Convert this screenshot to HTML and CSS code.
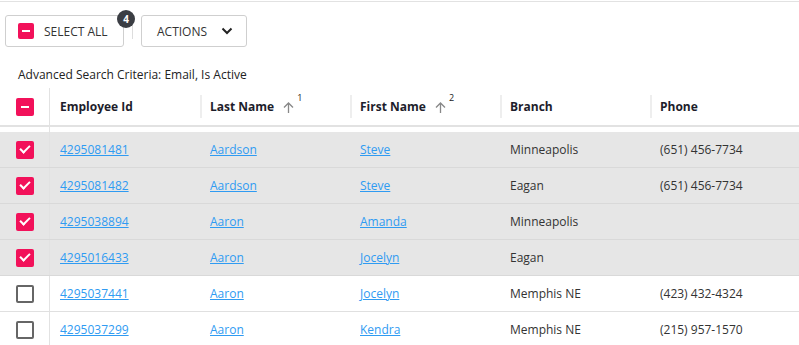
FILE: index.html
```html
<!DOCTYPE html>
<html lang="en">
  <head>
    <meta charset="UTF-8" />
    <meta name="viewport" content="width=device-width, initial-scale=1.0" />
    <title>Employees</title>
    <link rel="stylesheet" href="styles.css">
  </head>
  <body>
    <main class="panel">
      <div class="toolbar">
        <button class="btn selectAll">
          <span class="box partial"></span>
          SELECT ALL
          <span class="badge">4</span>
        </button>
        <span class="divider"></span>
        <button class="btn actions">
          ACTIONS
          <svg width="12" height="8" viewBox="0 0 12 8"><path d="M1.5 1.5 L6 6 L10.5 1.5" fill="none" stroke="#222" stroke-width="2"/></svg>
        </button>
      </div>
      <div class="criteria">Advanced Search Criteria: Email, Is Active</div>
      <div class="grid">
        <div class="head">
          <div class="cell chk"><span class="box partial"></span></div>
          <div class="cell"><span class="hd">Employee Id</span></div>
          <div class="cell">
            <span class="hd">Last Name</span>
            <svg class="arrow" width="11" height="11" viewBox="0 0 11 11"><path d="M5.5 11 V1.2 M1 5.5 L5.5 1 L10 5.5" fill="none" stroke="#888" stroke-width="1.3"/></svg>
            <sup class="order">1</sup>
          </div>
          <div class="cell">
            <span class="hd">First Name</span>
            <svg class="arrow" width="11" height="11" viewBox="0 0 11 11"><path d="M5.5 11 V1.2 M1 5.5 L5.5 1 L10 5.5" fill="none" stroke="#888" stroke-width="1.3"/></svg>
            <sup class="order">2</sup>
          </div>
          <div class="cell"><span class="hd">Branch</span></div>
          <div class="cell"><span class="hd">Phone</span></div>
        </div>
        <div class="body">
          <div class="row sel">
            <div class="cell chk"><span class="box checked"></span></div>
            <div class="cell"><a href="#">4295081481</a></div>
            <div class="cell"><a href="#">Aardson</a></div>
            <div class="cell"><a href="#">Steve</a></div>
            <div class="cell">Minneapolis</div>
            <div class="cell">(651) 456-7734</div>
          </div>
          <div class="row sel">
            <div class="cell chk"><span class="box checked"></span></div>
            <div class="cell"><a href="#">4295081482</a></div>
            <div class="cell"><a href="#">Aardson</a></div>
            <div class="cell"><a href="#">Steve</a></div>
            <div class="cell">Eagan</div>
            <div class="cell">(651) 456-7734</div>
          </div>
          <div class="row sel">
            <div class="cell chk"><span class="box checked"></span></div>
            <div class="cell"><a href="#">4295038894</a></div>
            <div class="cell"><a href="#">Aaron</a></div>
            <div class="cell"><a href="#">Amanda</a></div>
            <div class="cell">Minneapolis</div>
            <div class="cell"></div>
          </div>
          <div class="row sel">
            <div class="cell chk"><span class="box checked"></span></div>
            <div class="cell"><a href="#">4295016433</a></div>
            <div class="cell"><a href="#">Aaron</a></div>
            <div class="cell"><a href="#">Jocelyn</a></div>
            <div class="cell">Eagan</div>
            <div class="cell"></div>
          </div>
          <div class="row">
            <div class="cell chk"><span class="box"></span></div>
            <div class="cell"><a href="#">4295037441</a></div>
            <div class="cell"><a href="#">Aaron</a></div>
            <div class="cell"><a href="#">Jocelyn</a></div>
            <div class="cell">Memphis NE</div>
            <div class="cell">(423) 432-4324</div>
          </div>
          <div class="row">
            <div class="cell chk"><span class="box"></span></div>
            <div class="cell"><a href="#">4295037299</a></div>
            <div class="cell"><a href="#">Aaron</a></div>
            <div class="cell"><a href="#">Kendra</a></div>
            <div class="cell">Memphis NE</div>
            <div class="cell">(215) 957-1570</div>
          </div>
        </div>
      </div>
    </main>
  </body>
</html>
```

FILE: styles.css
```css
body {
  margin: 0;
  padding-top: 1px;
  background: #fff;
  font-family: "Open Sans", "DejaVu Sans", sans-serif;
  font-size: 12px;
  color: #333;
  overflow: hidden;
}
.panel {
  border-top: 1px solid #e2e2e2;
  height: 360px;
}
.toolbar {
  display: flex;
  align-items: center;
  padding: 13px 0 0 5px;
}
.btn {
  height: 32px;
  background: #fff;
  border: 1px solid #cfcfcf;
  border-radius: 3px;
  font-family: inherit;
  font-size: 12px;
  color: #333;
  display: flex;
  align-items: center;
  position: relative;
  cursor: pointer;
}
.selectAll {
  width: 119px;
  padding: 0 0 0 12px;
  gap: 10px;
}
.actions {
  width: 106px;
  padding: 0 0 0 15px;
  gap: 14px;
}
.divider {
  width: 1px;
  height: 16px;
  background: #ddd;
  margin: 0 8px 0 8px;
}
.badge {
  position: absolute;
  top: -6px;
  right: -12px;
  width: 18px;
  height: 18px;
  border-radius: 50%;
  background: #3b3e44;
  color: #fff;
  font-size: 10px;
  font-weight: bold;
  display: flex;
  align-items: center;
  justify-content: center;
}
.box {
  width: 16px;
  height: 16px;
  border-radius: 2px;
  box-sizing: border-box;
  border: 2px solid #666;
  background: #fff;
  display: inline-block;
  position: relative;
}
.box.partial,
.box.checked {
  border: none;
  background: #f2115a;
}
.box.partial::after {
  content: "";
  position: absolute;
  left: 4px;
  top: 7px;
  width: 8px;
  height: 2px;
  background: #fff;
}
.box.checked::after {
  content: "";
  position: absolute;
  left: 4px;
  top: 3px;
  width: 8px;
  height: 4px;
  border-left: 2px solid #fff;
  border-bottom: 2px solid #fff;
  transform: rotate(-45deg);
}
.grid .box {
  width: 18px;
  height: 18px;
}
.grid .box.partial::after {
  left: 5px;
  top: 8px;
}
.grid .box.checked::after {
  left: 4px;
  top: 4px;
}
.criteria {
  padding: 19px 0 0 18px;
  height: 22px;
  color: #222;
}
.head,
.row {
  display: grid;
  grid-template-columns: 50px repeat(4, 150px) 1fr;
}
.head {
  height: 37px;
  border-bottom: 2px solid #e2e2e2;
}
.body {
  padding-top: 5px;
  background: linear-gradient(to right, transparent 49px, #e2e2e2 49px, #e2e2e2 50px, transparent 50px);
}
.cell {
  display: flex;
  align-items: center;
  padding-left: 10px;
  white-space: nowrap;
}
.cell.chk {
  padding-left: 16px;
  border-right: 1px solid #e2e2e2;
}
.head .cell {
  position: relative;
}
.head .cell:not(.chk):not(:nth-child(2))::before {
  content: "";
  position: absolute;
  left: 0;
  top: 7px;
  width: 2px;
  height: 23px;
  background: #eee;
}
.hd {
  font-weight: bold;
  color: #1d1d2b;
}
.arrow {
  margin-left: 9px;
  position: relative;
  top: 1px;
}
.order {
  font-size: 9px;
  color: #222;
  align-self: flex-start;
  margin: 5px 0 0 3px;
  line-height: 1;
}
.row {
  height: 35px;
  border-bottom: 1px solid #e0e0e0;
  background: #fff;
}
.row.sel {
  background: #e6e6e6;
  border-bottom-color: #d9d9d9;
}
.row .cell {
  color: #333;
}
a {
  color: #2f9bf2;
  text-decoration: underline;
}
```
